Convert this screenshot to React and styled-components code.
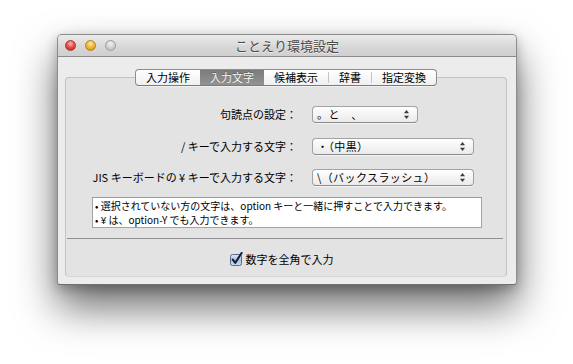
import React from 'react';
import styled, { createGlobalStyle } from 'styled-components';

const GlobalStyle = createGlobalStyle`
  html, body {
    margin: 0;
    padding: 0;
    background: #ffffff;
  }
  body {
    font-family: "Noto Sans CJK JP", "Liberation Sans", sans-serif;
    color: #000;
  }
`;

const Page = styled.div`
  width: 573px;
  height: 364px;
  padding: 34px 0 0 57px;
  box-sizing: border-box;
  overflow: hidden;
`;

const Window = styled.div`
  width: 460px;
  height: 251px;
  box-sizing: border-box;
  display: flex;
  flex-direction: column;
  background: #ececec;
  border: 1px solid #8c8c8c;
  border-bottom-color: #6f6f6f;
  border-radius: 5px 5px 3px 3px;
  box-shadow: 0 22px 42px rgba(0, 0, 0, 0.58), 0 4px 12px rgba(0, 0, 0, 0.25);
`;

const TitleBar = styled.div`
  height: 22px;
  box-sizing: border-box;
  display: grid;
  grid-template-columns: 1fr auto 1fr;
  align-items: center;
  padding: 0 7px;
  background: linear-gradient(#ebebeb, #d6d6d6 60%, #cfcfcf);
  border-bottom: 1px solid #8a8a8a;
  border-radius: 4px 4px 0 0;
`;

const Lights = styled.div`
  display: flex;
  gap: 9px;
`;

const Light = styled.span`
  width: 11px;
  height: 11px;
  border-radius: 50%;
  box-sizing: border-box;
  border: 1px solid ${p => p.$edge};
  background: radial-gradient(circle at 50% 30%, ${p => p.$hi} 0%, ${p => p.$base} 55%, ${p => p.$deep} 100%);
`;

const Title = styled.div`
  font-size: 13px;
  line-height: 16px;
  color: #4a4a4a;
  text-shadow: 0 1px 0 rgba(255, 255, 255, 0.6);
`;

const Body = styled.div`
  flex: 1;
  display: flex;
  flex-direction: column;
  padding: 12px 9px 7px 7px;
`;

const TabBar = styled.div`
  align-self: center;
  display: flex;
  align-items: stretch;
  height: 17px;
  box-sizing: border-box;
  margin-bottom: -9px;
  position: relative;
  z-index: 1;
  border: 1px solid #8d8d8d;
  border-bottom-color: #7a7a7a;
  border-radius: 4px;
  overflow: hidden;
  background: linear-gradient(#ffffff, #f0f0f0);
  box-shadow: 0 1px 0 rgba(255, 255, 255, 0.5);
`;

const Tab = styled.div`
  display: flex;
  align-items: center;
  padding: 0 10px;
  font-size: 11px;
  line-height: 15px;
  color: ${p => (p.$active ? '#f4f4f4' : '#000')};
  background: ${p => (p.$active ? 'linear-gradient(#7b7b7b, #939393)' : 'transparent')};
  text-shadow: ${p => (p.$active ? '0 -1px 0 rgba(0,0,0,0.25)' : 'none')};
`;

const TabDivider = styled.span`
  align-self: center;
  width: 1px;
  height: 11px;
  background: #c4c4c4;
`;

const GroupBox = styled.div`
  flex: 1;
  display: flex;
  flex-direction: column;
  padding: 28px 0 0;
  background: #e3e3e3;
  border: 1px solid #c3c3c3;
  border-bottom-color: #d6d6d6;
  border-radius: 4px;
`;

const Form = styled.div`
  display: grid;
  grid-template-columns: 231px auto;
  column-gap: 15px;
  row-gap: 14.5px;
  align-items: center;
`;

const Label = styled.div`
  text-align: right;
  font-size: 11px;
  line-height: 17px;
  white-space: nowrap;
`;

const Popup = styled.div`
  width: ${p => p.$w}px;
  height: 17px;
  box-sizing: border-box;
  display: flex;
  align-items: center;
  justify-content: space-between;
  padding: 0 8px 0 4px;
  font-size: 11px;
  line-height: 15px;
  white-space: pre;
  background: linear-gradient(#ffffff, #f3f3f3 55%, #ebebeb);
  border: 1px solid #a2a2a2;
  border-bottom-color: #8a8a8a;
  border-radius: 4px;
  box-shadow: 0 1px 0 rgba(255, 255, 255, 0.6);
`;

const PopupText = styled.span`
  letter-spacing: 0.4px;
`;

const Stepper = () => (
  <svg width="5" height="9" viewBox="0 0 5 9">
    <path d="M2.5 0 L5 3.2 L0 3.2 Z" fill="#3a3a3a" />
    <path d="M2.5 9 L5 5.8 L0 5.8 Z" fill="#3a3a3a" />
  </svg>
);

const InfoBox = styled.div`
  margin: 11px 24px 0 26px;
  height: 31px;
  box-sizing: border-box;
  padding: 1px 2px 0;
  background: #ffffff;
  border: 1px solid #a3a3a3;
  border-top-color: #999;
`;

const InfoLine = styled.div`
  font-size: 10px;
  line-height: 13.5px;
  height: 13.5px;
  white-space: nowrap;
`;

const Separator = styled.div`
  height: 1px;
  margin: 10px 3px 0 1px;
  background: #8f8f8f;
`;

const CheckRow = styled.label`
  display: flex;
  align-items: center;
  justify-content: center;
  gap: 3px;
  margin-top: 13px;
  padding-right: 9px;
  font-size: 11px;
  line-height: 14px;
`;

const CheckBox = () => (
  <svg width="13" height="14" viewBox="0 0 13 14">
    <defs>
      <linearGradient id="cb" x1="0" y1="0" x2="0" y2="1">
        <stop offset="0" stopColor="#dfe9f7" />
        <stop offset="0.5" stopColor="#a9c1e6" />
        <stop offset="1" stopColor="#c9daf2" />
      </linearGradient>
    </defs>
    <rect x="0.5" y="2.5" width="11" height="11" rx="2" fill="url(#cb)" stroke="#5b6b88" />
    <path d="M2.8 7.6 L5.3 10.8 L11.6 1" fill="none" stroke="#15203a" strokeWidth="2.1" strokeLinecap="round" strokeLinejoin="round" />
  </svg>
);

const tabs = ['入力操作', '入力文字', '候補表示', '辞書', '指定変換'];
const activeTab = 1;

const rows = [
  { label: '句読点の設定：', value: '。と　、', w: 106 },
  { label: '/ キーで入力する文字：', value: '・（中黒）', w: 162 },
  { label: 'JIS キーボードの ¥ キーで入力する文字：', value: '\\（バックスラッシュ）', w: 162 },
];

export default function App() {
  return (
    <Page>
      <GlobalStyle />
      <Window>
        <TitleBar>
          <Lights>
            <Light $hi="#ffb3ae" $base="#e0443e" $deep="#b42b27" $edge="#a33a36" />
            <Light $hi="#ffe9a6" $base="#eeb12f" $deep="#c98b12" $edge="#ad8425" />
            <Light $hi="#f4f4f4" $base="#cfcfcf" $deep="#b8b8b8" $edge="#9c9c9c" />
          </Lights>
          <Title>ことえり環境設定</Title>
          <span />
        </TitleBar>
        <Body>
          <TabBar>
            {tabs.map((t, i) => (
              <React.Fragment key={t}>
                {i > 0 && i !== activeTab && i - 1 !== activeTab && <TabDivider />}
                <Tab $active={i === activeTab}>{t}</Tab>
              </React.Fragment>
            ))}
          </TabBar>
          <GroupBox>
            <Form>
              {rows.map(r => (
                <React.Fragment key={r.label}>
                  <Label>{r.label}</Label>
                  <Popup $w={r.w}>
                    <PopupText>{r.value}</PopupText>
                    <Stepper />
                  </Popup>
                </React.Fragment>
              ))}
            </Form>
            <InfoBox>
              <InfoLine>• 選択されていない方の文字は、option キーと一緒に押すことで入力できます。</InfoLine>
              <InfoLine>• ¥ は、option-Y でも入力できます。</InfoLine>
            </InfoBox>
            <Separator />
            <CheckRow>
              <CheckBox />
              <span>数字を全角で入力</span>
            </CheckRow>
          </GroupBox>
        </Body>
      </Window>
    </Page>
  );
}
